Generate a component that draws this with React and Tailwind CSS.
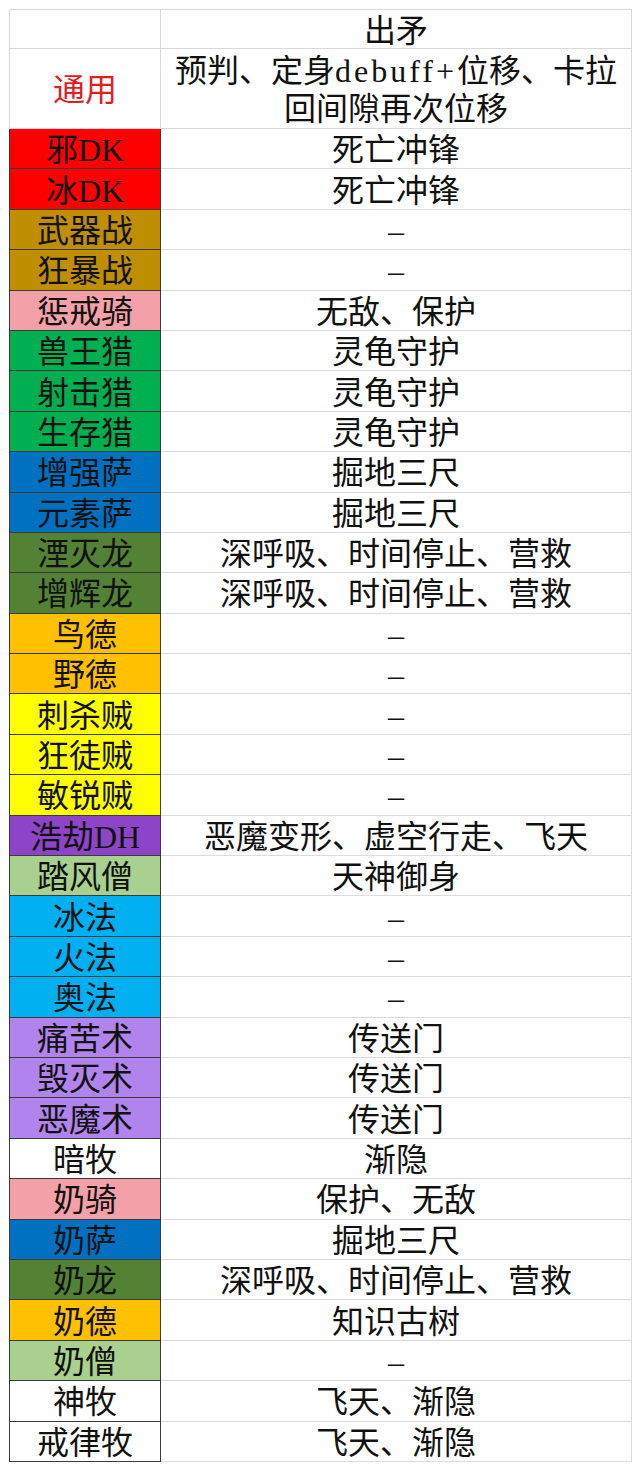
const rows = [
  ["邪DK", "bg-[#ff0000]", "死亡冲锋"],
  ["冰DK", "bg-[#ff0000]", "死亡冲锋"],
  ["武器战", "bg-[#bf8f00]", "–"],
  ["狂暴战", "bg-[#bf8f00]", "–"],
  ["惩戒骑", "bg-[#f4a0a8]", "无敌、保护"],
  ["兽王猎", "bg-[#00b050]", "灵龟守护"],
  ["射击猎", "bg-[#00b050]", "灵龟守护"],
  ["生存猎", "bg-[#00b050]", "灵龟守护"],
  ["增强萨", "bg-[#0070c0]", "掘地三尺"],
  ["元素萨", "bg-[#0070c0]", "掘地三尺"],
  ["湮灭龙", "bg-[#548235]", "深呼吸、时间停止、营救"],
  ["增辉龙", "bg-[#548235]", "深呼吸、时间停止、营救"],
  ["鸟德", "bg-[#ffc000]", "–"],
  ["野德", "bg-[#ffc000]", "–"],
  ["刺杀贼", "bg-[#ffff00]", "–"],
  ["狂徒贼", "bg-[#ffff00]", "–"],
  ["敏锐贼", "bg-[#ffff00]", "–"],
  ["浩劫DH", "bg-[#8e44c8]", "恶魔变形、虚空行走、飞天"],
  ["踏风僧", "bg-[#a9d08e]", "天神御身"],
  ["冰法", "bg-[#00b0f0]", "–"],
  ["火法", "bg-[#00b0f0]", "–"],
  ["奥法", "bg-[#00b0f0]", "–"],
  ["痛苦术", "bg-[#b084ec]", "传送门"],
  ["毁灭术", "bg-[#b084ec]", "传送门"],
  ["恶魔术", "bg-[#b084ec]", "传送门"],
  ["暗牧", "bg-white", "渐隐"],
  ["奶骑", "bg-[#f4a0a8]", "保护、无敌"],
  ["奶萨", "bg-[#0070c0]", "掘地三尺"],
  ["奶龙", "bg-[#548235]", "深呼吸、时间停止、营救"],
  ["奶德", "bg-[#ffc000]", "知识古树"],
  ["奶僧", "bg-[#a9d08e]", "–"],
  ["神牧", "bg-white", "飞天、渐隐"],
  ["戒律牧", "bg-white", "飞天、渐隐"],
];

const font = {
  fontFamily: '"Liberation Serif", "Noto Sans CJK SC", serif',
};

export default function App() {
  return (
    <div className="w-[640px] min-h-[1470px] bg-white pl-[9px] pt-[9px]" style={font}>
      <div className="w-[623px] text-[32px] text-[#111] font-normal">
        <div className="grid grid-cols-[152px_471px] h-[40px]">
          <div className="border border-[#d9d9d9]" />
          <div className="border-t border-r border-b border-[#d9d9d9] flex items-center justify-center leading-none pt-[3px]">
            出矛
          </div>
        </div>
        <div className="grid grid-cols-[152px_471px] h-[80px]">
          <div className="border-l border-r border-b border-[#d9d9d9] flex items-center justify-center text-[#e02020] leading-none pt-[3px]">
            通用
          </div>
          <div className="border-r border-b border-[#d9d9d9] flex items-center justify-center text-center leading-[38px] pt-[3px]">
            <div>
              预判、定身<span className="tracking-[3px]">debuff+</span>位移、卡拉
              <br />
              回间隙再次位移
            </div>
          </div>
        </div>
        {rows.map(([name, bg, text], i) => (
          <div key={i} className="grid grid-cols-[152px_471px] h-[40.4px]">
            <div
              className={`${bg} border-l border-r border-b border-[#3a3a3a] flex items-center justify-center leading-none pt-[3px]`}
            >
              {name}
            </div>
            <div className="border-r border-b border-[#dcdcdc] flex items-center justify-center leading-none pt-[3px]">
              {text}
            </div>
          </div>
        ))}
      </div>
    </div>
  );
}
